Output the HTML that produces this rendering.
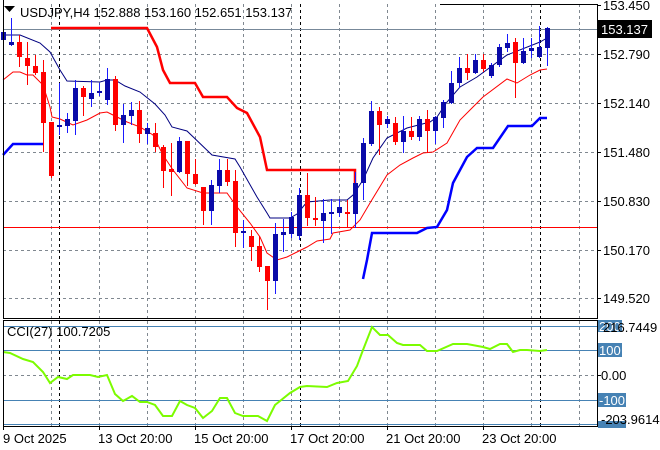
<!DOCTYPE html>
<html><head><meta charset="utf-8"><style>
html,body{margin:0;padding:0;background:#fff;}
svg{display:block;font-family:"Liberation Sans",sans-serif;font-size:13px;}
</style></head><body>
<svg width="660" height="450" viewBox="0 0 660 450" xmlns="http://www.w3.org/2000/svg">
<rect width="660" height="450" fill="#fff"/>
<g stroke="#808890" stroke-width="1" stroke-dasharray="3,3" fill="none">
<path d="M3 54.5H597M3 103.5H597M3 152.5H597M3 201.5H597M3 250.5H597M3 298.5H597M3 375.5H597"/>
<path d="M51.5 4V318M99.5 4V318M147.5 4V318M195.5 4V318M243.5 4V318M291.5 4V318M339.5 4V318M387.5 4V318M435.5 4V318M483.5 4V318M531.5 4V318M579.5 4V318"/>
<path d="M51.5 321V426M99.5 321V426M147.5 321V426M195.5 321V426M243.5 321V426M291.5 321V426M339.5 321V426M387.5 321V426M435.5 321V426M483.5 321V426M531.5 321V426M579.5 321V426"/>
</g>
<g stroke="#000" stroke-width="1" stroke-dasharray="3,3" fill="none">
<path d="M59.5 4V318M300.5 4V318M540.5 4V318M59.5 321V426M300.5 321V426M540.5 321V426"/>
</g>
<path d="M3 29.5H597" stroke="#778899"/>
<path d="M3 227.5H597" stroke="#ff0000"/>
<path d="M51 28H147L157 47L163 70L170 83H195L203 97H227L237 108L247 113L260 137L267 170H355V184" stroke="#ff0000" stroke-width="2.5" fill="none"/>
<path d="M3 155L13 144H43" stroke="#0000ff" stroke-width="2.5" fill="none"/>
<path d="M363 279L367 260L372 233H417L427 228L437 227L447 210L453 183L467 157L477 148H493L508 126H532L540 118H547" stroke="#0000ff" stroke-width="2.5" fill="none"/>
<path d="M3 35L20 35L40 43L50 52L60 70L67 81L100 82L107 80L115 80L125 86L140 92L155 104L165 115L172 127L187 131L212 155L235 159L240 167L257 197L267 213L270 218L290 218L297 214L307 202L330 200L347 200L353 195L363 180L373 158L387 138L407 128L430 122L437 117L447 102L460 87L477 77L507 55L540 42L547 38" stroke="#000080" fill="none"/>
<path d="M3 80L13 72L20 72L27 75L33 75L43 85L50 107L52 117L60 119L73 125L87 120L100 113L107 112L113 115L127 122L140 127L153 135L163 155L173 170L187 188L203 193L227 193L237 207L250 223L260 237L267 253L277 260L287 257L297 252L307 247L317 241L330 239L333 233L350 230L360 220L370 203L387 175L400 165L413 158L423 153L433 152L447 143L460 120L473 107L483 97L507 79L517 83L530 75L540 70L547 69" stroke="#ff0000" fill="none"/>
<g stroke-width="1">
<line x1="3.5" y1="10" x2="3.5" y2="45" stroke="#1a1aff"/><rect x="1" y="32" width="5" height="8" fill="#0a0aa8"/>
<line x1="11.5" y1="18" x2="11.5" y2="46" stroke="#1a1aff"/><rect x="9" y="42" width="5" height="3" fill="#0a0aa8"/>
<line x1="19.5" y1="35" x2="19.5" y2="67" stroke="#f00"/><rect x="17" y="42" width="5" height="15" fill="#f00"/>
<line x1="27.5" y1="42" x2="27.5" y2="85" stroke="#f00"/><rect x="25" y="58" width="5" height="8" fill="#f00"/>
<line x1="35.5" y1="55" x2="35.5" y2="75" stroke="#f00"/><rect x="33" y="66" width="5" height="7" fill="#f00"/>
<line x1="43.5" y1="60" x2="43.5" y2="152" stroke="#f00"/><rect x="41" y="72" width="5" height="51" fill="#f00"/>
<line x1="51.5" y1="122" x2="51.5" y2="178" stroke="#f00"/><rect x="49" y="122" width="5" height="54" fill="#f00"/>
<line x1="59.5" y1="83" x2="59.5" y2="135" stroke="#1a1aff"/><rect x="57" y="125" width="5" height="2" fill="#0a0aa8"/>
<line x1="67.5" y1="113" x2="67.5" y2="133" stroke="#1a1aff"/><rect x="65" y="119" width="5" height="7" fill="#0a0aa8"/>
<line x1="75.5" y1="80" x2="75.5" y2="135" stroke="#1a1aff"/><rect x="73" y="88" width="5" height="33" fill="#0a0aa8"/>
<line x1="83.5" y1="86" x2="83.5" y2="116" stroke="#f00"/><rect x="81" y="88" width="5" height="9" fill="#f00"/>
<line x1="91.5" y1="80" x2="91.5" y2="107" stroke="#1a1aff"/><rect x="89" y="93" width="5" height="6" fill="#0a0aa8"/>
<line x1="99.5" y1="83" x2="99.5" y2="96" stroke="#1a1aff"/><rect x="97" y="91" width="5" height="2" fill="#0a0aa8"/>
<line x1="107.5" y1="68" x2="107.5" y2="105" stroke="#1a1aff"/><rect x="105" y="79" width="5" height="21" fill="#0a0aa8"/>
<line x1="115.5" y1="76" x2="115.5" y2="131" stroke="#f00"/><rect x="113" y="79" width="5" height="46" fill="#f00"/>
<line x1="123.5" y1="104" x2="123.5" y2="143" stroke="#1a1aff"/><rect x="121" y="115" width="5" height="10" fill="#0a0aa8"/>
<line x1="131.5" y1="102" x2="131.5" y2="125" stroke="#1a1aff"/><rect x="129" y="110" width="5" height="6" fill="#0a0aa8"/>
<line x1="139.5" y1="101" x2="139.5" y2="143" stroke="#f00"/><rect x="137" y="110" width="5" height="24" fill="#f00"/>
<line x1="147.5" y1="123" x2="147.5" y2="144" stroke="#1a1aff"/><rect x="145" y="128" width="5" height="6" fill="#0a0aa8"/>
<line x1="155.5" y1="123" x2="155.5" y2="152" stroke="#f00"/><rect x="153" y="133" width="5" height="14" fill="#f00"/>
<line x1="163.5" y1="145" x2="163.5" y2="188" stroke="#f00"/><rect x="161" y="147" width="5" height="24" fill="#f00"/>
<line x1="171.5" y1="143" x2="171.5" y2="196" stroke="#f00"/><rect x="169" y="169" width="5" height="3" fill="#f00"/>
<line x1="179.5" y1="137" x2="179.5" y2="173" stroke="#1a1aff"/><rect x="177" y="141" width="5" height="31" fill="#0a0aa8"/>
<line x1="187.5" y1="141" x2="187.5" y2="186" stroke="#f00"/><rect x="185" y="141" width="5" height="33" fill="#f00"/>
<line x1="195.5" y1="159" x2="195.5" y2="185" stroke="#f00"/><rect x="193" y="174" width="5" height="10" fill="#f00"/>
<line x1="203.5" y1="187" x2="203.5" y2="225" stroke="#f00"/><rect x="201" y="187" width="5" height="24" fill="#f00"/>
<line x1="211.5" y1="180" x2="211.5" y2="225" stroke="#1a1aff"/><rect x="209" y="185" width="5" height="26" fill="#0a0aa8"/>
<line x1="219.5" y1="159" x2="219.5" y2="193" stroke="#1a1aff"/><rect x="217" y="170" width="5" height="16" fill="#0a0aa8"/>
<line x1="227.5" y1="159" x2="227.5" y2="186" stroke="#f00"/><rect x="225" y="170" width="5" height="12" fill="#f00"/>
<line x1="235.5" y1="170" x2="235.5" y2="247" stroke="#f00"/><rect x="233" y="181" width="5" height="52" fill="#f00"/>
<line x1="243.5" y1="220" x2="243.5" y2="248" stroke="#1a1aff"/><rect x="241" y="231" width="5" height="2" fill="#0a0aa8"/>
<line x1="251.5" y1="230" x2="251.5" y2="261" stroke="#f00"/><rect x="249" y="236" width="5" height="11" fill="#f00"/>
<line x1="259.5" y1="236" x2="259.5" y2="272" stroke="#f00"/><rect x="257" y="246" width="5" height="21" fill="#f00"/>
<line x1="267.5" y1="266" x2="267.5" y2="310" stroke="#f00"/><rect x="265" y="266" width="5" height="15" fill="#f00"/>
<line x1="275.5" y1="223" x2="275.5" y2="294" stroke="#1a1aff"/><rect x="273" y="234" width="5" height="47" fill="#0a0aa8"/>
<line x1="283.5" y1="219" x2="283.5" y2="252" stroke="#1a1aff"/><rect x="281" y="232" width="5" height="3" fill="#0a0aa8"/>
<line x1="291.5" y1="212" x2="291.5" y2="238" stroke="#1a1aff"/><rect x="289" y="217" width="5" height="17" fill="#0a0aa8"/>
<line x1="299.5" y1="188" x2="299.5" y2="240" stroke="#1a1aff"/><rect x="297" y="195" width="5" height="41" fill="#0a0aa8"/>
<line x1="307.5" y1="173" x2="307.5" y2="226" stroke="#f00"/><rect x="305" y="195" width="5" height="23" fill="#f00"/>
<line x1="315.5" y1="197" x2="315.5" y2="226" stroke="#f00"/><rect x="313" y="218" width="5" height="2" fill="#f00"/>
<line x1="323.5" y1="199" x2="323.5" y2="243" stroke="#1a1aff"/><rect x="321" y="213" width="5" height="8" fill="#0a0aa8"/>
<line x1="331.5" y1="199" x2="331.5" y2="234" stroke="#1a1aff"/><rect x="329" y="212" width="5" height="2" fill="#0a0aa8"/>
<line x1="339.5" y1="199" x2="339.5" y2="217" stroke="#1a1aff"/><rect x="337" y="207" width="5" height="6" fill="#0a0aa8"/>
<line x1="347.5" y1="200" x2="347.5" y2="228" stroke="#f00"/><rect x="345" y="212" width="5" height="2" fill="#f00"/>
<line x1="355.5" y1="172" x2="355.5" y2="228" stroke="#1a1aff"/><rect x="353" y="183" width="5" height="31" fill="#0a0aa8"/>
<line x1="363.5" y1="138" x2="363.5" y2="200" stroke="#1a1aff"/><rect x="361" y="143" width="5" height="40" fill="#0a0aa8"/>
<line x1="371.5" y1="101" x2="371.5" y2="146" stroke="#1a1aff"/><rect x="369" y="111" width="5" height="33" fill="#0a0aa8"/>
<line x1="379.5" y1="107" x2="379.5" y2="155" stroke="#f00"/><rect x="377" y="111" width="5" height="14" fill="#f00"/>
<line x1="387.5" y1="116" x2="387.5" y2="128" stroke="#1a1aff"/><rect x="385" y="119" width="5" height="5" fill="#0a0aa8"/>
<line x1="395.5" y1="117" x2="395.5" y2="145" stroke="#f00"/><rect x="393" y="123" width="5" height="19" fill="#f00"/>
<line x1="403.5" y1="116" x2="403.5" y2="153" stroke="#1a1aff"/><rect x="401" y="131" width="5" height="11" fill="#0a0aa8"/>
<line x1="411.5" y1="117" x2="411.5" y2="140" stroke="#f00"/><rect x="409" y="131" width="5" height="6" fill="#f00"/>
<line x1="419.5" y1="116" x2="419.5" y2="141" stroke="#1a1aff"/><rect x="417" y="119" width="5" height="18" fill="#0a0aa8"/>
<line x1="427.5" y1="110" x2="427.5" y2="153" stroke="#f00"/><rect x="425" y="119" width="5" height="12" fill="#f00"/>
<line x1="435.5" y1="116" x2="435.5" y2="144" stroke="#1a1aff"/><rect x="433" y="117" width="5" height="14" fill="#0a0aa8"/>
<line x1="443.5" y1="100" x2="443.5" y2="128" stroke="#1a1aff"/><rect x="441" y="102" width="5" height="16" fill="#0a0aa8"/>
<line x1="451.5" y1="71" x2="451.5" y2="104" stroke="#1a1aff"/><rect x="449" y="83" width="5" height="20" fill="#0a0aa8"/>
<line x1="459.5" y1="57" x2="459.5" y2="88" stroke="#1a1aff"/><rect x="457" y="68" width="5" height="15" fill="#0a0aa8"/>
<line x1="467.5" y1="54" x2="467.5" y2="80" stroke="#f00"/><rect x="465" y="68" width="5" height="5" fill="#f00"/>
<line x1="475.5" y1="54" x2="475.5" y2="74" stroke="#1a1aff"/><rect x="473" y="60" width="5" height="13" fill="#0a0aa8"/>
<line x1="483.5" y1="54" x2="483.5" y2="72" stroke="#f00"/><rect x="481" y="60" width="5" height="9" fill="#f00"/>
<line x1="491.5" y1="63" x2="491.5" y2="78" stroke="#1a1aff"/><rect x="489" y="65" width="5" height="11" fill="#0a0aa8"/>
<line x1="499.5" y1="44" x2="499.5" y2="67" stroke="#1a1aff"/><rect x="497" y="47" width="5" height="18" fill="#0a0aa8"/>
<line x1="507.5" y1="34" x2="507.5" y2="52" stroke="#1a1aff"/><rect x="505" y="43" width="5" height="5" fill="#0a0aa8"/>
<line x1="515.5" y1="38" x2="515.5" y2="98" stroke="#f00"/><rect x="513" y="42" width="5" height="21" fill="#f00"/>
<line x1="523.5" y1="38" x2="523.5" y2="64" stroke="#1a1aff"/><rect x="521" y="51" width="5" height="12" fill="#0a0aa8"/>
<line x1="531.5" y1="38" x2="531.5" y2="58" stroke="#1a1aff"/><rect x="529" y="48" width="5" height="3" fill="#0a0aa8"/>
<line x1="539.5" y1="26" x2="539.5" y2="58" stroke="#1a1aff"/><rect x="537" y="47" width="5" height="10" fill="#0a0aa8"/>
<line x1="547.5" y1="27" x2="547.5" y2="66" stroke="#1a1aff"/><rect x="545" y="28" width="5" height="20" fill="#0a0aa8"/>
</g>
<g stroke="#4682b4" stroke-width="1">
<path d="M3 326.5H597M3 350.5H597M3 400.5H597M3 424.5H597"/>
</g>
<path d="M3 352L10 353L23 359L33 362L43 372L50 383L58 377L67 379L73 375L90 375L98 377L107 375L115 394L123 401L132 396L140 402L147 402L155 405L163 416L172 416L180 401L187 405L195 408L203 418L212 411L220 398L227 398L235 413L243 416L258 416L267 421L275 405L290 393L300 387L307 386L327 387L337 383L348 381L357 366L363 350L372 327L380 335L388 335L397 343L403 345L420 345L427 351L437 351L453 344L467 344L483 347L490 349L500 344L507 344L513 352L520 350L527 350L540 351L547 350" stroke="#7cfc00" stroke-width="2" fill="none"/>
<g stroke="#000" stroke-width="1" fill="none">
<path d="M440 4.5H597.5V318.5H3.5V0"/>
<rect x="3.5" y="320.5" width="594" height="106"/>
</g>
<path d="M4 6L15 6L9.5 12Z" fill="#000"/>
<text x="20" y="17" fill="#000">USDJPY,H4  152.888 153.160 152.651 153.137</text>
<text x="7" y="336" fill="#000">CCI(27) 100.7205</text>
<g stroke="#000"><path d="M597 5.5H601M597 54.5H601M597 103.5H601M597 152.5H601M597 201.5H601M597 250.5H601M597 298.5H601M597 375.5H601"/></g>
<g fill="#000">
<text x="603" y="10">153.450</text>
<text x="603" y="59">152.790</text>
<text x="603" y="108">152.140</text>
<text x="603" y="157">151.480</text>
<text x="603" y="206">150.830</text>
<text x="603" y="255">150.170</text>
<text x="603" y="303">149.520</text>
</g>
<rect x="598" y="20" width="54" height="18" fill="#000"/>
<text x="601" y="34" fill="#fff">153.137</text>
<rect x="598" y="320" width="24" height="12" fill="#4682b4"/>
<text x="599" y="331" fill="#fff">200</text>
<text x="603" y="332" fill="#000">216.7449</text>
<rect x="598" y="343" width="24" height="14" fill="#4682b4"/>
<text x="599" y="355" fill="#fff">100</text>
<text x="601" y="380" fill="#000">0.00</text>
<rect x="598" y="393" width="28" height="14" fill="#4682b4"/>
<text x="599" y="405" fill="#fff">-100</text>
<rect x="598" y="421" width="28" height="7" fill="#4682b4"/>
<text x="601" y="424" fill="#000">-203.9614</text>
<g stroke="#000"><path d="M3.5 426V430M99.5 426V430M195.5 426V430M291.5 426V430M387.5 426V430M483.5 426V430"/></g>
<g fill="#000">
<text x="3" y="443">9 Oct 2025</text>
<text x="98" y="443">13 Oct 20:00</text>
<text x="194" y="443">15 Oct 20:00</text>
<text x="290" y="443">17 Oct 20:00</text>
<text x="386" y="443">21 Oct 20:00</text>
<text x="482" y="443">23 Oct 20:00</text>
</g>
</svg>
</body></html>
